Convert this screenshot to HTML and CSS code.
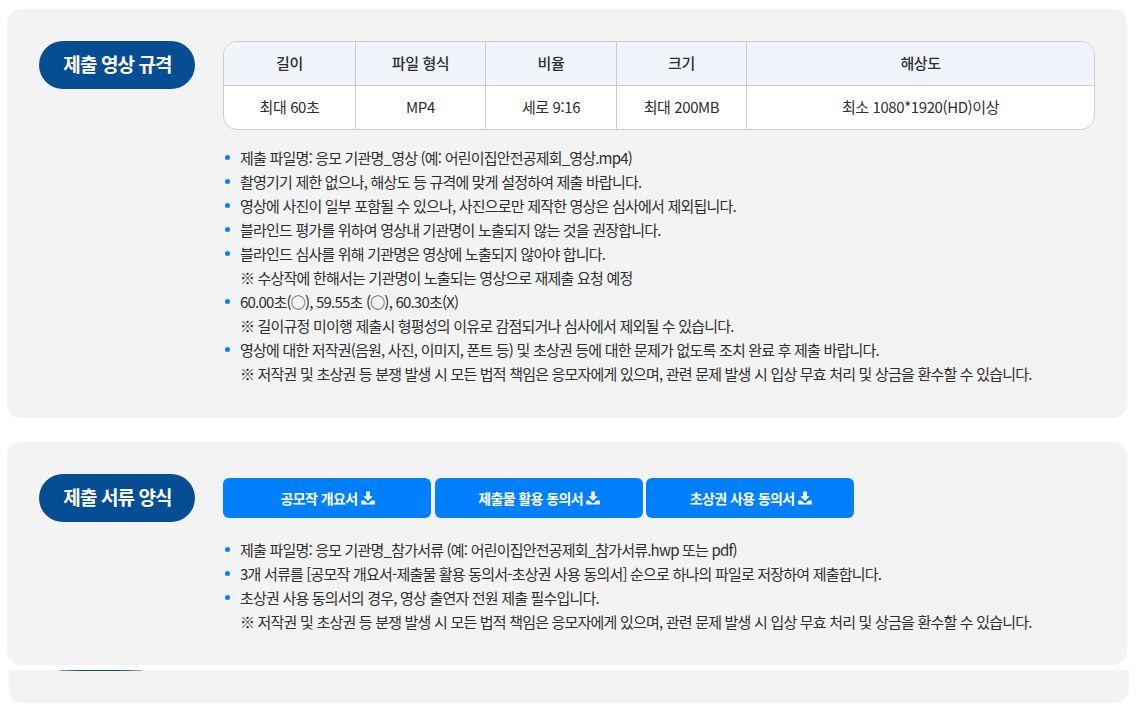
FILE: index.html
```html
<!DOCTYPE html>
<html lang="ko">
<head>
<meta charset="utf-8">
<title>제출 규격</title>
<link rel="stylesheet" href="styles.css">
</head>
<body>
<main class="page">
  <section class="card card-video">
    <h2 class="pill">제출 영상 규격</h2>
    <div class="content">
      <table class="spec">
        <thead>
          <tr><th class="c1">길이</th><th class="c2">파일 형식</th><th class="c3">비율</th><th class="c4">크기</th><th>해상도</th></tr>
        </thead>
        <tbody>
          <tr><td>최대 60초</td><td>MP4</td><td>세로 9:16</td><td>최대 200MB</td><td>최소 1080*1920(HD)이상</td></tr>
        </tbody>
      </table>
      <ul class="notes">
        <li>제출 파일명: 응모 기관명_영상 (예: 어린이집안전공제회_영상.mp4)</li>
        <li>촬영기기 제한 없으나, 해상도 등 규격에 맞게 설정하여 제출 바랍니다.</li>
        <li>영상에 사진이 일부 포함될 수 있으나, 사진으로만 제작한 영상은 심사에서 제외됩니다.</li>
        <li>블라인드 평가를 위하여 영상내 기관명이 노출되지 않는 것을 권장합니다.</li>
        <li>블라인드 심사를 위해 기관명은 영상에 노출되지 않아야 합니다.<br>※ 수상작에 한해서는 기관명이 노출되는 영상으로 재제출 요청 예정</li>
        <li>60.00초(○), 59.55초 (○), 60.30초(X)<br>※ 길이규정 미이행 제출시 형평성의 이유로 감점되거나 심사에서 제외될 수 있습니다.</li>
        <li>영상에 대한 저작권(음원, 사진, 이미지, 폰트 등) 및 초상권 등에 대한 문제가 없도록 조치 완료 후 제출 바랍니다.<br>※ 저작권 및 초상권 등 분쟁 발생 시 모든 법적 책임은 응모자에게 있으며, 관련 문제 발생 시 입상 무효 처리 및 상금을 환수할 수 있습니다.</li>
      </ul>
    </div>
  </section>

  <section class="card card-docs">
    <h2 class="pill">제출 서류 양식</h2>
    <div class="content">
      <div class="buttons">
        <a class="btn" href="#">공모작 개요서 <svg class="dl" viewBox="0 0 14 14" aria-hidden="true"><path d="M5.2 .4h3.6v4.8h2.9L7 9.9 2.3 5.2h2.9z"/><path d="M.2 9.4h3.1l2.5 2.3a1.7 1.7 0 0 0 2.4 0l2.5-2.3h3.1v4.2H.2z"/></svg></a>
        <a class="btn" href="#">제출물 활용 동의서 <svg class="dl" viewBox="0 0 14 14" aria-hidden="true"><path d="M5.2 .4h3.6v4.8h2.9L7 9.9 2.3 5.2h2.9z"/><path d="M.2 9.4h3.1l2.5 2.3a1.7 1.7 0 0 0 2.4 0l2.5-2.3h3.1v4.2H.2z"/></svg></a>
        <a class="btn" href="#">초상권 사용 동의서 <svg class="dl" viewBox="0 0 14 14" aria-hidden="true"><path d="M5.2 .4h3.6v4.8h2.9L7 9.9 2.3 5.2h2.9z"/><path d="M.2 9.4h3.1l2.5 2.3a1.7 1.7 0 0 0 2.4 0l2.5-2.3h3.1v4.2H.2z"/></svg></a>
      </div>
      <ul class="notes notes-docs">
        <li>제출 파일명: 응모 기관명_참가서류 (예: 어린이집안전공제회_참가서류.hwp 또는 pdf)</li>
        <li>3개 서류를 [공모작 개요서-제출물 활용 동의서-초상권 사용 동의서] 순으로 하나의 파일로 저장하여 제출합니다.</li>
        <li>초상권 사용 동의서의 경우, 영상 출연자 전원 제출 필수입니다.<br>※ 저작권 및 초상권 등 분쟁 발생 시 모든 법적 책임은 응모자에게 있으며, 관련 문제 발생 시 입상 무효 처리 및 상금을 환수할 수 있습니다.</li>
      </ul>
    </div>
  </section>

  <section class="card-peek"><span class="peek-pill"></span></section>
</main>
</body>
</html>
```

FILE: styles.css
```css
* { box-sizing: border-box; }
html, body { margin: 0; padding: 0; background: #fff; }
body {
  font-family: "Noto Sans CJK KR", "Noto Sans", sans-serif;
  color: #2e2e2e;
  overflow: hidden;
}
.page { width: 1138px; height: 706px; padding: 9px 0 0 7px; overflow: hidden; }
.card {
  width: 1120px;
  background: #f3f3f4;
  border-radius: 14px;
  padding: 32px;
  display: flex;
  align-items: flex-start;
  gap: 28px;
}
.card-video { height: 409px; }
.card-docs { height: 223px; margin-top: 24px; }
.pill {
  flex: none;
  width: 156px;
  height: 48px;
  margin: 0;
  padding-left: 1px;
  border-radius: 24px;
  background: #054e93;
  color: #fff;
  font-size: 19px;
  font-weight: 700;
  letter-spacing: -0.9px;
  line-height: 46px;
  text-align: center;
}
.content { width: 872px; }
.spec {
  width: 872px;
  height: 89px;
  border-collapse: separate;
  border-spacing: 0;
  table-layout: fixed;
  background: #fff;
  border: 1px solid #ccc;
  border-radius: 14px;
  overflow: hidden;
  font-size: 15px;
  letter-spacing: -0.4px;
}
.spec th, .spec td {
  padding: 0 0 2px;
  text-align: center;
  color: #2e2e2e;
  border-right: 1px solid #ccc;
}
.spec th:last-child, .spec td:last-child { border-right: 0; }
.spec th {
  height: 44px;
  background: #f0f5fc;
  font-weight: 500;
  border-bottom: 1px solid #ccc;
}
.spec td { height: 43px; font-weight: 400; }
.c1 { width: 132px; }
.c2 { width: 130px; }
.c3 { width: 131px; }
.c4 { width: 130px; }
.notes {
  list-style: none;
  margin: 16px 0 0;
  padding: 0;
  font-size: 15px;
  line-height: 24px;
  letter-spacing: -0.8px;
}
.notes-docs { margin-top: 19.6px; }
.notes li { position: relative; padding-left: 17px; white-space: nowrap; }
.notes li::before {
  content: "";
  position: absolute;
  left: 2px;
  top: 9px;
  width: 5px;
  height: 5px;
  border-radius: 50%;
  background: #007fff;
}
.buttons { display: flex; gap: 3.6px; margin-top: 4px; }
.btn {
  width: 208px;
  height: 40px;
  padding-left: 1px;
  border-radius: 6px;
  background: #007fff;
  color: #fff;
  font-size: 14px;
  font-weight: 700;
  letter-spacing: -0.6px;
  text-decoration: none;
  display: flex;
  align-items: center;
  justify-content: center;
  gap: 3px;
}
.dl { width: 14px; height: 14px; fill: #fff; }
.card-peek {
  width: 1120px;
  height: 33px;
  margin: 5px 0 0 2px;
  background: #f3f3f4;
  border-radius: 0 0 14px 14px;
  overflow: hidden;
}
.peek-pill {
  display: block;
  width: 85px;
  height: 1px;
  margin-left: 49px;
  background: #054e93;
  border-radius: 50% 50% 0 0 / 100% 100% 0 0;
}
```
